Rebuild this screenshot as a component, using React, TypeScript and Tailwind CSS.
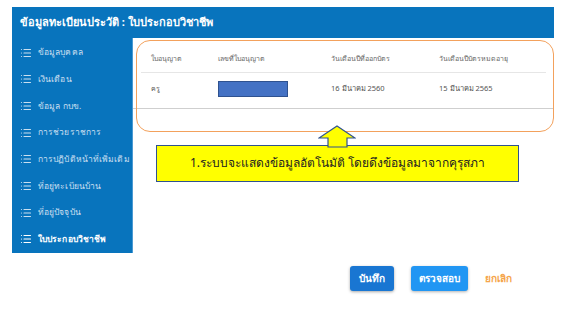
import { List } from "lucide-react";

const menu = [
  "ข้อมูลบุคคล",
  "เงินเดือน",
  "ข้อมูล กบข.",
  "การช่วยราชการ",
  "การปฏิบัติหน้าที่เพิ่มเติม",
  "ที่อยู่ทะเบียนบ้าน",
  "ที่อยู่ปัจจุบัน",
  "ใบประกอบวิชาชีพ",
];

const font = { fontFamily: '"Noto Sans", "Liberation Sans", sans-serif' };

export default function App() {
  return (
    <div className="relative h-[317px] w-[574px] overflow-hidden bg-white" style={font}>
      <div className="ml-[12px] mt-[7px] w-[542px]">
        {/* header */}
        <div className="flex h-[31px] items-center bg-[#0874bd] px-[8px] text-[11px] font-bold text-white">
          ข้อมูลทะเบียนประวัติ : ใบประกอบวิชาชีพ
        </div>

        <div className="flex">
          {/* sidebar */}
          <div className="flex h-[215px] w-[121px] flex-col gap-[9.7px] border-r border-[#4a9ad3] bg-[#0874bd] pl-[8px] pt-[6px]">
            {menu.map((m, i) => {
              const active = i === menu.length - 1;
              return (
                <div
                  key={m}
                  className={`flex h-[17px] items-center gap-[6px] text-[8.5px] tracking-[0.1px] ${
                    active ? "font-bold text-white" : "text-[#c9dff0]"
                  }`}
                >
                  <List size={12} strokeWidth={2.2} className={`shrink-0 ${active ? "text-white" : "text-[#c9dff0]"}`} />
                  <span className="whitespace-nowrap">{m}</span>
                </div>
              );
            })}
          </div>

          {/* content */}
          <div className="flex-1">
            <div className="border-b border-[#cfcfcf]">
              <div className="mx-[8px] grid grid-cols-[67px_113px_108px_1fr] border-b border-[#e6e6e6] pl-[10px] pt-[16px] pb-[7px] text-[7px] text-[#666]">
                <span>ใบอนุญาต</span>
                <span>เลขที่ใบอนุญาต</span>
                <span>วันเดือนปีที่ออกบัตร</span>
                <span>วันเดือนปีบัตรหมดอายุ</span>
              </div>
              <div className="mx-[8px] grid h-[35px] grid-cols-[67px_113px_108px_1fr] items-center pl-[10px] pb-[2px] text-[7.5px] text-[#555]">
                <span className="text-[7px]">ครู</span>
                <span>
                  <span className="block h-[16px] w-[70px] border border-[#2f528f] bg-[#4472c4]" />
                </span>
                <span>16 มีนาคม 2560</span>
                <span>15 มีนาคม 2565</span>
              </div>
            </div>

            <div className="ml-[23px] mt-[36px] flex h-[37px] w-[363px] items-center justify-center border-[1.5px] border-[#2f528f] bg-[#ffff00] text-[12px] text-[#222]">
              1.ระบบจะแสดงข้อมูลอัตโนมัติ โดยดึงข้อมูลมาจากคุรุสภา
            </div>
          </div>
        </div>

        {/* footer buttons */}
        <div className="mt-[13px] flex items-center justify-end gap-[17px] pr-[42px]">
          <button className="h-[25px] w-[44px] rounded-[3px] bg-[#1976d2] text-[10px] font-bold text-white shadow-[0_1px_3px_rgba(0,0,0,0.35)]">
            บันทึก
          </button>
          <button className="h-[25px] w-[57px] rounded-[3px] bg-[#2196f3] text-[10px] font-bold text-white shadow-[0_1px_3px_rgba(0,0,0,0.3)]">
            ตรวจสอบ
          </button>
          <span className="text-[10px] font-bold text-[#f5a54a]">ยกเลิก</span>
        </div>
      </div>

      {/* annotation: orange outline */}
      <div className="pointer-events-none absolute left-[136px] top-[40px] h-[92px] w-[418px] rounded-[14px] border-[1.5px] border-[#f3a15c]" />

      {/* annotation: arrow */}
      <svg className="absolute left-[318px] top-[125px]" width="38" height="23" viewBox="0 0 38 23">
        <path
          d="M19 1 L37 13 L29 13 L29 22 L10 22 L10 13 L1 13 Z"
          fill="#ffff00"
          stroke="#2f528f"
          strokeWidth="1.2"
          strokeLinejoin="miter"
        />
      </svg>
    </div>
  );
}
